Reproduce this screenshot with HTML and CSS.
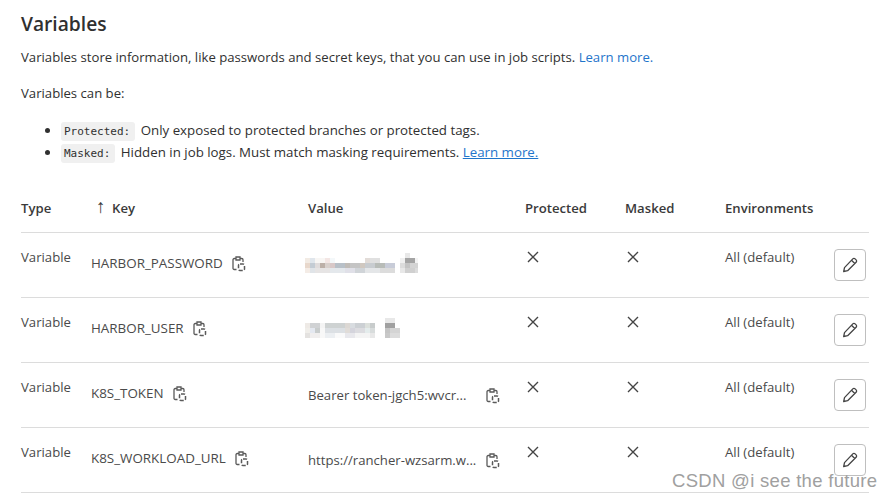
FILE: index.html
```html
<!DOCTYPE html>
<html lang="en">
<head>
    <meta charset="UTF-8">
    <meta name="viewport" content="width=device-width, initial-scale=1.0">
    <title>Variables</title>
    <link rel="stylesheet" href="styles.css">
</head>
<body>
    <svg class="icon-defs" width="0" height="0">
        <symbol id="copy" viewBox="0 0 14 16">
            <path d="M3.500 2.500H2.200A1.200 1.200 0 0 0 1 3.700v8.600a1.200 1.200 0 0 0 1.200 1.200h2.300M8.500 2.500h1.300A1.200 1.200 0 0 1 11 3.700V6M4 1h4v3H4z" fill="none" stroke="currentColor" stroke-width="1.300"/>
            <rect x="6.500" y="8" width="6" height="6.500" rx="1.500" fill="none" stroke="currentColor" stroke-width="1.500" stroke-dasharray="4 1.500"/>
        </symbol>
        <symbol id="close" viewBox="0 0 12 12">
            <path d="M1 1l10 10M11 1L1 11" fill="none" stroke="currentColor" stroke-width="1.400"/>
        </symbol>
        <symbol id="pencil" viewBox="0 0 16 16">
            <path d="M10.800 1.900a1.600 1.600 0 0 1 2.300 0l1 1a1.600 1.600 0 0 1 0 2.300L5.600 13.700l-3.900.8.8-3.900zM9.500 3.200l3.300 3.300" fill="none" stroke="currentColor" stroke-width="1.300" stroke-linejoin="round"/>
        </symbol>
    </svg>

    <h1>Variables</h1>
    <p>Variables store information, like passwords and secret keys, that you can use in job scripts. <a href="#">Learn more.</a></p>
    <p>Variables can be:</p>
    <ul class="rules">
        <li><code>Protected:</code> Only exposed to protected branches or protected tags.</li>
        <li><code>Masked:</code> Hidden in job logs. Must match masking requirements. <a href="#" class="under">Learn more.</a></li>
    </ul>

    <table class="vars">
        <thead>
            <tr>
                <th class="col-type">Type</th>
                <th class="col-key"><span class="arrow">↑</span>Key</th>
                <th class="col-value">Value</th>
                <th class="col-prot">Protected</th>
                <th class="col-mask">Masked</th>
                <th class="col-env">Environments</th>
                <th class="col-act"></th>
            </tr>
        </thead>
        <tbody>
            <tr>
                <td>Variable</td>
                <td class="low"><span class="key">HARBOR_PASSWORD</span><svg class="copy"><use href="#copy"/></svg></td>
                <td class="masked"><span class="mosaic mosaic-a"></span><span class="block block-a"></span></td>
                <td><svg class="cross"><use href="#close"/></svg></td>
                <td><svg class="cross"><use href="#close"/></svg></td>
                <td>All (default)</td>
                <td class="act"><button class="edit"><svg><use href="#pencil"/></svg></button></td>
            </tr>
            <tr>
                <td>Variable</td>
                <td class="low"><span class="key">HARBOR_USER</span><svg class="copy"><use href="#copy"/></svg></td>
                <td class="masked"><span class="mosaic mosaic-b"></span><span class="block block-b"></span></td>
                <td><svg class="cross"><use href="#close"/></svg></td>
                <td><svg class="cross"><use href="#close"/></svg></td>
                <td>All (default)</td>
                <td class="act"><button class="edit"><svg><use href="#pencil"/></svg></button></td>
            </tr>
            <tr>
                <td>Variable</td>
                <td class="low"><span class="key">K8S_TOKEN</span><svg class="copy"><use href="#copy"/></svg></td>
                <td class="lower"><span class="val">Bearer token-jgch5:wvcr...</span><svg class="copy"><use href="#copy"/></svg></td>
                <td><svg class="cross"><use href="#close"/></svg></td>
                <td><svg class="cross"><use href="#close"/></svg></td>
                <td>All (default)</td>
                <td class="act"><button class="edit"><svg><use href="#pencil"/></svg></button></td>
            </tr>
            <tr>
                <td>Variable</td>
                <td class="low"><span class="key">K8S_WORKLOAD_URL</span><svg class="copy"><use href="#copy"/></svg></td>
                <td class="lower"><span class="val">https://rancher-wzsarm.w...</span><svg class="copy"><use href="#copy"/></svg></td>
                <td><svg class="cross"><use href="#close"/></svg></td>
                <td><svg class="cross"><use href="#close"/></svg></td>
                <td>All (default)</td>
                <td class="act"><button class="edit"><svg><use href="#pencil"/></svg></button></td>
            </tr>
        </tbody>
    </table>

    <div class="watermark">CSDN @i see the future</div>
</body>
</html>
```

FILE: styles.css
```css
body {
    font-family: "Open Sans", sans-serif;
    font-size: 13.15px;
    color: #303030;
    background-color: #fff;
    margin: 0;
    padding: 12px 22px 0 21px;
    height: 485px;
    overflow: hidden;
    position: relative;
}
.icon-defs {
    position: absolute;
}
h1 {
    font-size: 19.2px;
    font-weight: 600;
    line-height: 24px;
    margin: 0 0 11px;
}
p {
    line-height: 20px;
    margin: 0 0 16px;
}
a {
    color: #1f75cb;
    text-decoration: none;
}
a.under {
    text-decoration: underline;
}
.rules {
    margin: 0 0 22px;
    padding-left: 40px;
}
.rules li {
    font-size: 13.3px;
    line-height: 22px;
}
code {
    font-family: "DejaVu Sans Mono", monospace;
    font-size: 11px;
    line-height: 1;
    background: #f0f0f0;
    border-radius: 3px;
    padding: 3px 5px 3px 3px;
    margin-right: 2px;
}
.vars {
    width: 848px;
    border-collapse: collapse;
    table-layout: fixed;
}
.vars th {
    text-align: left;
    font-weight: 600;
    color: #3a3a3a;
    height: 47px;
    padding: 0;
    border-bottom: 1px solid #dcdcdc;
    box-sizing: border-box;
}
.vars td {
    height: 65px;
    padding: 15px 0 0;
    vertical-align: top;
    border-bottom: 1px solid #dcdcdc;
    box-sizing: border-box;
    line-height: 18px;
    color: #4a4a4a;
}
.vars td.low { padding-top: 21px; }
.vars td.lower { padding-top: 23px; }
.vars td.act { padding-top: 16px; }
.vars td.masked {
    padding-top: 20px;
}
.col-type { width: 70px; }
.col-key { width: 217px; }
.col-value { width: 217px; }
.col-prot { width: 100px; }
.col-mask { width: 100px; }
.col-env { width: 109px; }
.arrow {
    display: inline-block;
    font-size: 19px;
    font-weight: 400;
    line-height: 10px;
    width: 16px;
    margin-left: 5px;
}
.key {
    font-size: 13.4px;
    margin-right: 9px;
}
.val {
    display: inline-block;
    width: 178px;
}
.copy {
    width: 14px;
    height: 16px;
    color: #5a5a5a;
    vertical-align: -4px;
}
.cross {
    display: block;
    width: 12px;
    height: 12px;
    color: #444;
    margin: 3px 0 0 2px;
}
.edit {
    display: flex;
    align-items: center;
    justify-content: center;
    width: 32px;
    height: 32px;
    padding: 0;
    background: #fff;
    border: 1px solid #bfbfbf;
    border-radius: 4px;
    color: #444;
}
.edit svg {
    width: 16px;
    height: 16px;
}

/* blurred out values */
.masked {
    white-space: nowrap;
}
.mosaic, .block {
    display: inline-block;
    background-repeat: no-repeat;
    vertical-align: top;
}
.mosaic {
    height: 15px;
    margin: 5px 0 0 -3px;
    background-size: 100% 5px;
    background-position: 0 0, 0 5px, 0 10px;
}
.mosaic-a {
    width: 90px;
    background-image:
        linear-gradient(90deg, #f2ebe4 5px, #e0e6ec 5px 10px, #f8f6f4 10px 20px, #f3e6e4 20px 25px, #f4f8fa 25px 30px, #fff 30px 60px, #e2dcd8 60px 65px, #e0e0e0 65px 75px, #fff 75px),
        linear-gradient(90deg, #e8d8cc 5px, #c4ccd4 5px 10px, #e0dcdc 10px 15px, #bcb0a8 15px 20px, #d8d0cc 20px 25px, #d8c8c8 25px 30px, #b8c0c8 30px 40px, #c0bcb8 40px 45px, #c4c4c4 45px 55px, #d0c8c0 55px 60px, #c8ccd0 60px 70px, #b8bcb8 70px 80px, #c8ccd8 80px 90px),
        linear-gradient(90deg, #f4ece6 5px, #e0e4e8 5px 10px, #e6e4e4 10px 25px, #e4e8ec 25px 40px, #e0e0e8 40px 50px, #d0d4d8 50px 60px, #e4e6e8 60px 75px, #dcdcdc 75px 90px);
}
.mosaic-b {
    width: 70px;
    background-image:
        linear-gradient(90deg, #eeeae6 5px, #d0d2d4 5px 15px, #f4f4f4 15px 20px, #ced2d2 20px 40px, #dcd8d4 40px 45px, #d8dce0 45px 50px, #ccd0d4 50px 60px, #dce0dc 60px 65px, #c8cccc 65px 70px),
        linear-gradient(90deg, #f0eeea 5px, #e4e8f0 5px 10px, #c8cccc 10px 15px, #f8f8f8 15px 20px, #dce0e4 20px 40px, #e0dcd8 40px 45px, #d4d4dc 45px 50px, #dcdce0 50px 60px, #e4ecec 60px 65px, #d8dcdc 65px 70px),
        linear-gradient(90deg, #e4e2e0 5px, #f0eeee 5px 15px, #f8f8f8 15px 20px, #eceff2 20px 30px, #fafafa 30px 40px, #e8e8ec 40px 50px, #f4f4f4 50px 65px, #e8e8e8 65px 70px);
}
.block {
    background-size: 100% 5px;
    background-position: 0 0, 0 5px, 0 10px, 0 15px;
}
.block-a {
    width: 18px;
    height: 20px;
    margin-left: 5px;
    background-image:
        linear-gradient(90deg, #fff 5px, #e8e8e8 5px 10px, #fff 10px),
        linear-gradient(90deg, #f0f0f0 5px, #a4a4a4 5px 15px, #f4f4f4 15px),
        linear-gradient(90deg, #dcdcdc 5px, #c4c4c4 5px 10px, #d4d4d4 10px),
        linear-gradient(90deg, #e8e8e8 5px, #d0d0d0 5px 15px, #dcdcdc 15px);
}
.block-b {
    width: 15px;
    height: 20px;
    margin-left: 10px;
    background-image:
        linear-gradient(90deg, #e8e8e8 10px, #fff 10px),
        linear-gradient(90deg, #a0a0a0 10px, #fff 10px),
        linear-gradient(90deg, #c4c4c4 5px, #d4d4d4 5px),
        linear-gradient(90deg, #c8c8c8 5px, #dcdcdc 5px);
}
.watermark {
    position: absolute;
    left: 672px;
    top: 470px;
    font-family: "Liberation Sans", sans-serif;
    font-size: 18.5px;
    color: #a0a0a0;
    letter-spacing: 0.3px;
}
```
